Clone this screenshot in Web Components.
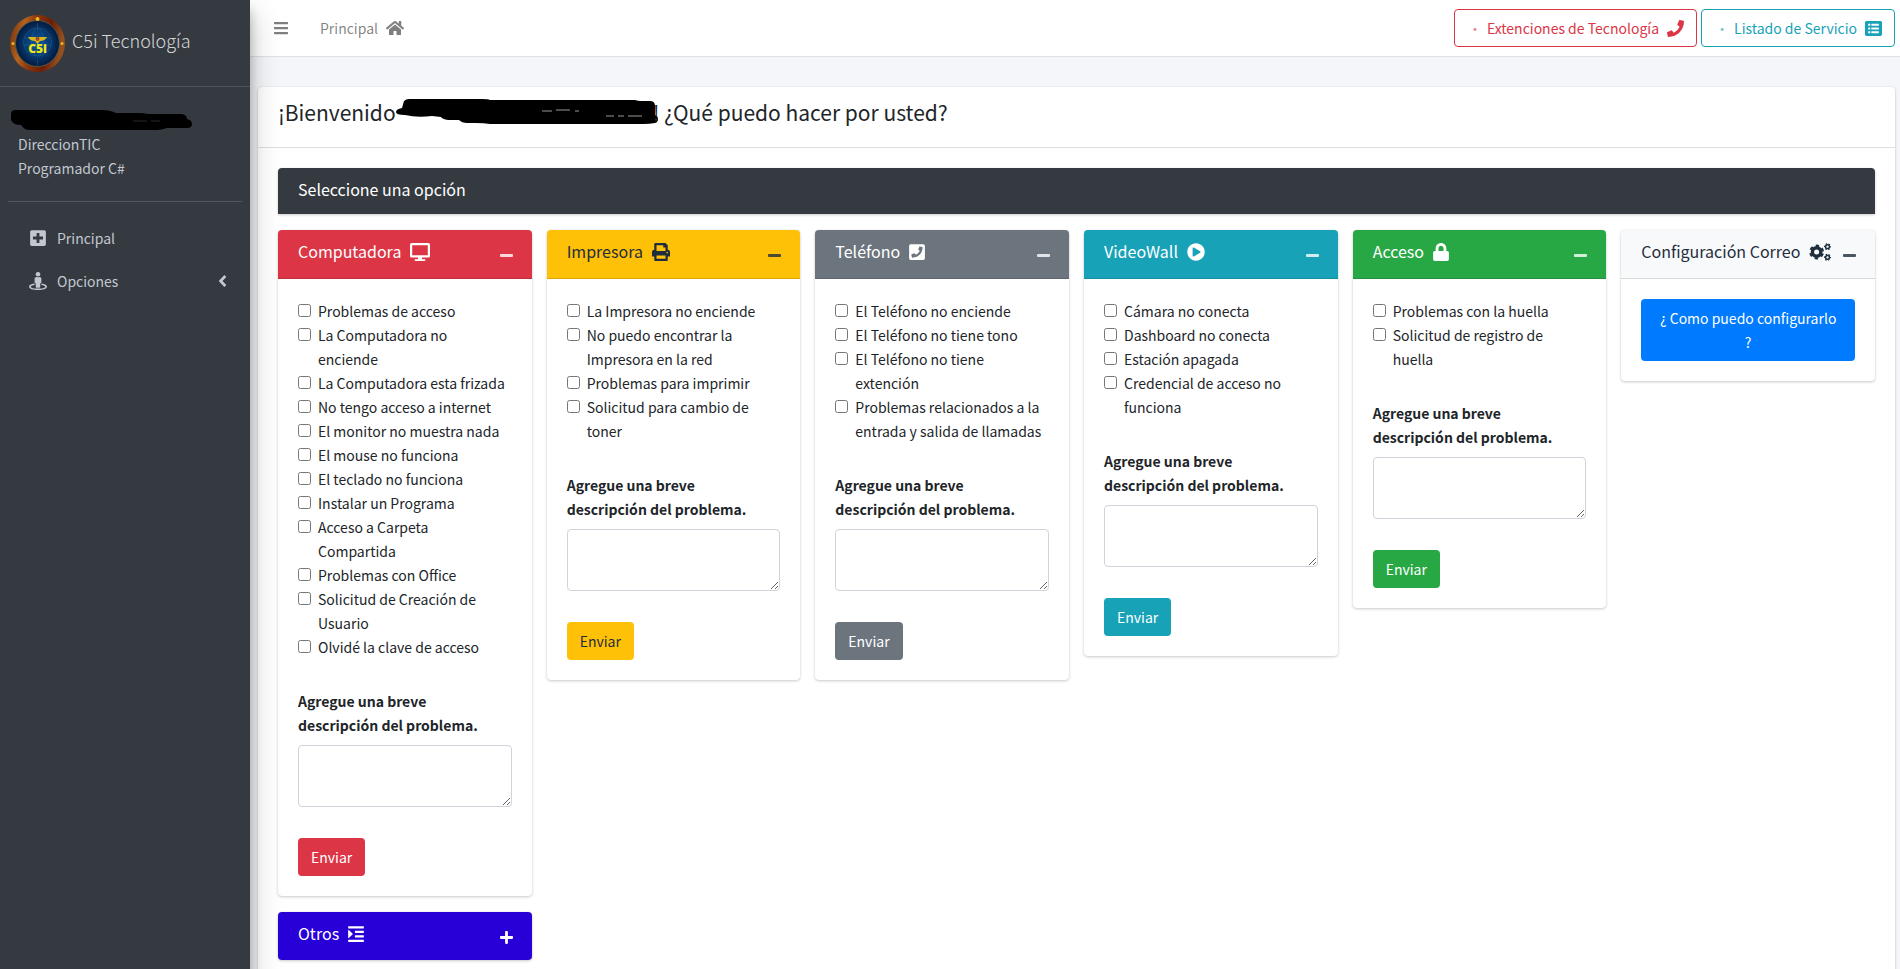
<!DOCTYPE html>
<html lang="es">
<head>
<meta charset="utf-8">
<title>C5i Tecnología</title>
<style>
html { scrollbar-width: none; }
body { margin: 0; font: 400 14px/24px "Noto Sans CJK SC", "Open Sans", sans-serif; color: #212529; background: #f4f6f9; }
</style>
</head>
<body>
<support-app></support-app>

<script>
const SQUARE = 'M400 32H48C21.5 32 0 53.5 0 80v352c0 26.5 21.5 48 48 48h352c26.5 0 48-21.5 48-48V80c0-26.5-21.5-48-48-48z';
const ICONS = {
  bars: [448, '<path d="M16 132h416c9 0 16-7 16-16V76c0-9-7-16-16-16H16C7 60 0 67 0 76v40c0 9 7 16 16 16zm0 160h416c9 0 16-7 16-16v-40c0-9-7-16-16-16H16c-9 0-16 7-16 16v40c0 9 7 16 16 16zm0 160h416c9 0 16-7 16-16v-40c0-9-7-16-16-16H16c-9 0-16 7-16 16v40c0 9 7 16 16 16z"/>'],
  home: [576, '<path d="M280.37 148.26L96 300.11V464a16 16 0 0 0 16 16l112.06-.29a16 16 0 0 0 15.92-16V368a16 16 0 0 1 16-16h64a16 16 0 0 1 16 16v95.64a16 16 0 0 0 16 16.05L464 480a16 16 0 0 0 16-16V300L295.67 148.26a12.19 12.19 0 0 0-15.3 0zM571.6 251.47L488 182.56V44.05a12 12 0 0 0-12-12h-56a12 12 0 0 0-12 12v72.61L318.47 43a48 48 0 0 0-61 0L4.34 251.47a12 12 0 0 0-1.6 16.9l25.5 31A12 12 0 0 0 45.15 301l235.22-193.74a12.19 12.19 0 0 1 15.3 0L530.9 301a12 12 0 0 0 16.9-1.6l25.5-31a12 12 0 0 0-1.7-16.93z"/>'],
  phone: [512, '<path d="M493.4 24.6l-104-24c-11.3-2.6-22.9 3.3-27.5 13.9l-48 112c-4.2 9.8-1.4 21.3 6.9 28l60.6 49.6c-36 76.7-98.9 140.5-177.2 177.2l-49.6-60.6c-6.8-8.3-18.2-11.1-28-6.9l-112 48C3.9 366.5-2 378.1.6 389.4l24 104C27.1 504.2 36.7 512 48 512c256.1 0 464-207.5 464-464 0-11.2-7.7-20.9-18.6-23.4z"/>'],
  list: [512, '<path fill-rule="evenodd" d="M464 32H48C21.5 32 0 53.5 0 80v352c0 26.5 21.5 48 48 48h416c26.500 0 48-21.500 48-48V80c0-26.500-21.500-48-48-48zM96 112v64h64v-64zm96 0v64h224v-64zM96 224v64h64v-64zm96 0v64h224v-64zM96 336v64h64v-64zm96 0v64h224v-64z"/>'],
  desktop: [576, '<path d="M528 0H48C21.5 0 0 21.5 0 48v320c0 26.5 21.5 48 48 48h192l-16 48h-72c-13.3 0-24 10.7-24 24s10.7 24 24 24h272c13.3 0 24-10.7 24-24s-10.7-24-24-24h-72l-16-48h192c26.5 0 48-21.5 48-48V48c0-26.5-21.5-48-48-48zm-16 352H64V64h448v288z"/>'],
  print: [512, '<path d="M448 192V77.25c0-8.49-3.37-16.62-9.37-22.63L393.37 9.37c-6-6-14.14-9.37-22.63-9.37H96C78.33 0 64 14.33 64 32v160c-35.35 0-64 28.65-64 64v112c0 8.84 7.16 16 16 16h48v96c0 17.67 14.33 32 32 32h320c17.67 0 32-14.33 32-32v-96h48c8.84 0 16-7.16 16-16V256c0-35.35-28.65-64-64-64zm-64 256H128v-96h256v96zm0-224H128V64h192v48c0 8.84 7.16 16 16 16h48v96zm48 72c-13.25 0-24-10.75-24-24s10.75-24 24-24 24 10.75 24 24-10.75 24-24 24z"/>'],
  phoneSquare: [448, '<path d="' + SQUARE + 'M94 416c-7.033 0-13.057-4.873-14.616-11.627l-14.998-65a15 15 0 0 1 8.707-17.16l69.998-29.999a15 15 0 0 1 17.518 4.289l30.997 37.885c48.944-22.963 88.297-62.858 110.781-110.78l-37.886-30.997a15.001 15.001 0 0 1-4.289-17.518l30-69.998a15 15 0 0 1 17.16-8.707l65 14.998A14.997 14.997 0 0 1 384 126c0 160.292-129.945 290-290 290z" fill-rule="evenodd"/>'],
  play: [512, '<path d="M256 8C119 8 8 119 8 256s111 248 248 248 248-111 248-248S393 8 256 8zm115.7 272l-176 101c-15.8 8.8-35.7-2.5-35.7-21V152c0-18.4 19.8-29.8 35.7-21l176 107c16.4 9.2 16.4 32.9 0 42z" fill-rule="evenodd"/>'],
  lock: [448, '<path d="M400 224h-24v-72C376 68.2 307.8 0 224 0S72 68.2 72 152v72H48c-26.5 0-48 21.5-48 48v192c0 26.5 21.5 48 48 48h352c26.5 0 48-21.5 48-48V272c0-26.5-21.5-48-48-48zm-104 0H152v-72c0-39.7 32.3-72 72-72s72 32.3 72 72v72z"/>'],
  cogs: [640, '<g fill="none" stroke="currentColor"><circle cx="210" cy="256" r="120" stroke-width="96"/><circle cx="210" cy="256" r="180" stroke-width="60" stroke-dasharray="96 92.5" stroke-dashoffset="142"/><circle cx="520" cy="104" r="54" stroke-width="40"/><circle cx="520" cy="104" r="82" stroke-width="36" stroke-dasharray="44 41.87" stroke-dashoffset="22"/><circle cx="520" cy="408" r="54" stroke-width="40"/><circle cx="520" cy="408" r="82" stroke-width="36" stroke-dasharray="44 41.87" stroke-dashoffset="22"/></g>'],
  indent: [448, '<path d="M27.3 363.3l96-96a16 16 0 0 0 0-22.6l-96-96C17.3 138.7 0 145.8 0 160v192c0 14.3 17.3 21.3 27.3 11.3z"/><rect y="416" width="448" height="64" rx="14"/><rect x="192" y="288" width="256" height="64" rx="13"/><rect x="192" y="160" width="256" height="64" rx="13"/><rect y="32" width="448" height="64" rx="14"/>'],
  plusSquare: [448, '<path fill-rule="evenodd" d="' + SQUARE + 'M92 296c-7 0-12-5-12-12v-56c0-7 5-12 12-12h92v-92c0-7 5-12 12-12h56c7 0 12 5 12 12v92h92c7 0 12 5 12 12v56c0 7-5 12-12 12h-92v92c0 7-5 12-12 12h-56c-7 0-12-5-12-12v-92z"/>'],
  street: [512, '<path d="M367.9 329.76c-4.62 5.3-9.78 10.1-15.9 13.65v22.94c66.52 9.34 112 28.05 112 49.65 0 30.93-93.12 56-208 56S48 446.93 48 416c0-21.6 45.48-40.3 112-49.65v-22.94c-6.12-3.55-11.28-8.35-15.9-13.65C58.87 345.34 0 378.05 0 416c0 53.02 114.62 96 256 96s256-42.98 256-96c0-37.95-58.87-70.66-144.1-86.24z"/><circle cx="256" cy="64" r="64"/><path d="M192 320v96c0 17.7 14.3 32 32 32h64c17.7 0 32-14.3 32-32v-96c17.7 0 32-14.3 32-32v-96c0-26.5-21.5-48-48-48h-11.8a89 89 0 0 1-72.4 0H208c-26.5 0-48 21.5-48 48v96c0 17.7 14.3 32 32 32z"/>'],
  left: [256, '<path d="M31.7 239l136-136c9.4-9.4 24.6-9.4 33.9 0l22.6 22.6c9.4 9.4 9.4 24.6 0 33.9L127.9 256l96.4 96.4c9.4 9.4 9.4 24.6 0 33.9L201.7 409c-9.4 9.4-24.6 9.4-33.9 0l-136-136c-9.5-9.4-9.5-24.6-.1-34z"/>'],
  minus: [448, '<rect y="208" width="448" height="96" rx="32"/>'],
  plus: [448, '<path d="M416 208H272V64c0-17.7-14.3-32-32-32h-32c-17.7 0-32 14.3-32 32v144H32c-17.7 0-32 14.3-32 32v32c0 17.7 14.3 32 32 32h144v144c0 17.7 14.3 32 32 32h32c17.7 0 32-14.3 32-32V304h144c17.7 0 32-14.3 32-32v-32c0-17.7-14.3-32-32-32z"/>']
};

class Base extends HTMLElement {
  connectedCallback() {
    if (!this.shadowRoot) this.attachShadow({ mode: 'open' }).innerHTML = this.view();
  }
}

/* <fa-icon name size>: solid glyph as tall as its size attribute */
customElements.define('fa-icon', class extends Base {
  view() {
    const [w, body] = ICONS[this.getAttribute('name')];
    const h = Number(this.getAttribute('size') || 16);
    return `<style>:host{display:inline-flex;flex:none}svg{display:block;fill:currentColor}</style>
      <svg width="${Math.round(w * h / 512)}" height="${h}" viewBox="0 0 ${w} 512" aria-hidden="true">${body}</svg>`;
  }
});

customElements.define('brand-logo', class extends Base {
  view() {
    return `<style>:host{display:block;flex:none}svg{display:block}</style>
    <svg width="55" height="57" viewBox="0 0 55 57" role="img" aria-label="C5i">
      <defs>
        <linearGradient id="rim" x1="0" x2="1" y1="0" y2=".2"><stop offset="0" stop-color="#6b2a0c"/><stop offset=".28" stop-color="#b5621f"/><stop offset=".5" stop-color="#8a3408"/><stop offset=".75" stop-color="#6b1d05"/><stop offset="1" stop-color="#94501c"/></linearGradient>
        <radialGradient id="sea"><stop offset="0" stop-color="#0b5a9c"/><stop offset=".6" stop-color="#07386f"/><stop offset="1" stop-color="#04183a"/></radialGradient>
      </defs>
      <ellipse cx="27.5" cy="28.5" rx="27.5" ry="28.5" fill="url(#rim)"/>
      <ellipse cx="27.5" cy="28.5" rx="22" ry="23" fill="url(#sea)" stroke="#4c5a48"/>
      <g fill="none" stroke="#2b7193" opacity=".4"><ellipse cx="27.5" cy="27" rx="14" ry="14"/><ellipse cx="27.5" cy="27" rx="6" ry="14"/><path d="M14 23h27M14 30h27M27.5 8v8M27.5 45v6"/></g>
      <path d="M18 22h8l1.5 2 1.5-2h8q-2 4-7 4l-2.5 3-2.5-3q-5 0-7-4z" fill="#d9b41c"/><circle cx="27.5" cy="24" r="2" fill="#a54a2a"/>
      <g fill="#f2b61b"><circle cx="27.5" cy="4" r="2"/><circle cx="3" cy="28.5" r="1.5"/><circle cx="52" cy="28.5" r="1.5"/></g>
      <text x="27.5" y="38" text-anchor="middle" font-family="Open Sans, sans-serif" font-weight="800" font-size="12" fill="#efe41a">C5i</text>
    </svg>`;
  }
});

customElements.define('nav-item', class extends Base {
  view() {
    const more = this.hasAttribute('more') ? '<fa-icon name="left" size="18"></fa-icon>' : '';
    return `<style>:host{display:block}
      a{display:flex;align-items:center;height:40px;padding:0 15px 0 21px;color:inherit;text-decoration:none}
      .icon{width:18px;display:flex;justify-content:center;margin-right:10px}
      span.label{flex:1}</style>
      <a href="#"><span class="icon"><fa-icon name="${this.getAttribute('icon')}" size="18"></fa-icon></span><span class="label"><slot></slot></span>${more}</a>`;
  }
});

customElements.define('side-bar', class extends Base {
  view() {
    return `<style>
      :host{display:block;flex:none;box-sizing:border-box;width:250px;background:#343a40;color:#c2c7d0;position:relative;z-index:2;
        box-shadow:0 14px 28px rgba(0,0,0,.25),0 10px 10px rgba(0,0,0,.22)}
      .brand{display:flex;align-items:center;gap:7px;height:86px;padding-left:10px;border-bottom:1px solid #4b545c;color:rgba(255,255,255,.8);
        font-size:18px;font-weight:300;text-decoration:none}
      .brand span{padding-bottom:6px}
      .user{margin:0 8px;padding:22px 0 21px 10px;border-bottom:1px solid #4f5962}
      .user svg{display:block;margin:0 0 1px -8px}
      .user p{margin:0}
      nav{display:flex;flex-direction:column;gap:3px;padding:16px 8px}
    </style>
    <a class="brand" href="#"><brand-logo></brand-logo><span>C5i Tecnología</span></a>
    <div class="user">
      <svg width="182" height="22" viewBox="0 0 182 22" aria-hidden="true"><path d="M4 1h88q8 0 14 3h22q6 0 10 1h34q5 1 5 5 5 1 5 5 0 4-5 4h-20q-6 2-10 2H20q-6 0-9-5-8 0-10-5V5q0-3 3-4z"/><path d="M123 12h14m4 0h9" stroke="#343a40" opacity=".7"/></svg>
      <p>DireccionTIC</p><p>Programador C#</p>
    </div>
    <nav><nav-item icon="plusSquare">Principal</nav-item><nav-item icon="street" more>Opciones</nav-item></nav>`;
  }
});

customElements.define('outline-button', class extends Base {
  view() {
    return `<style>:host{display:block;color:var(--tone)}
      button{display:flex;align-items:center;height:38px;padding:0 12px;border:1px solid;border-radius:4px;background:none;color:inherit;font:inherit}
      i{width:16px;margin-right:4px;text-align:center;font-style:normal;opacity:.6}
      fa-icon{margin-left:8px}</style>
      <button type="button"><i>·</i><slot></slot><fa-icon name="${this.getAttribute('icon')}" size="17"></fa-icon></button>`;
  }
});

customElements.define('top-bar', class extends Base {
  view() {
    return `<style>
      :host{display:flex;align-items:center;justify-content:space-between;box-sizing:border-box;height:57px;padding:0 5px 0 24px;background:#fff;border-bottom:1px solid #dee2e6;color:rgba(0,0,0,.5)}
      .links,.actions{display:flex;align-items:center}
      .links{gap:32px}.actions{gap:4px}
      a{display:flex;align-items:center;gap:8px;color:inherit;text-decoration:none}
    </style>
    <div class="links"><a href="#" aria-label="Menú"><fa-icon name="bars"></fa-icon></a><a href="#">Principal <fa-icon name="home"></fa-icon></a></div>
    <div class="actions"><outline-button icon="phone" style="--tone:#dc3545">Extenciones de Tecnología</outline-button><outline-button icon="list" style="--tone:#17a2b8">Listado de Servicio</outline-button></div>`;
  }
});

/* Coloured card with a collapsible body; tone and ink come in as custom properties */
customElements.define('option-card', class extends Base {
  view() {
    const closed = this.hasAttribute('closed');
    return `<style>
      :host{display:block;border-radius:4px;background:#fff;box-shadow:0 0 1px rgba(0,0,0,.125),0 1px 3px rgba(0,0,0,.2)}
      header{display:flex;box-sizing:border-box;height:${closed ? 48 : 49}px;padding:11px 19px 11px 20px;background:var(--tone);color:var(--ink);
        border-radius:${closed ? '4px' : '4px 4px 0 0'};border-bottom:${closed ? 0 : 1}px solid rgba(0,0,0,.125)}
      h3{flex:1;display:flex;align-items:center;gap:9px;margin:0;height:21px;font-size:16px;line-height:21px;font-weight:400;white-space:nowrap}
      button{display:flex;align-items:center;height:29px;padding:0;border:0;background:none;color:inherit;opacity:${closed ? 1 : .8}}
      .body{padding:20px}
    </style>
    <header><h3>${this.getAttribute('heading')}<fa-icon name="${this.getAttribute('icon')}" size="18"></fa-icon></h3>
    <button type="button" aria-label="${closed ? 'Expandir' : 'Contraer'}"><fa-icon name="${closed ? 'plus' : 'minus'}" size="15"></fa-icon></button></header>
    ${closed ? '' : '<div class="body"><slot></slot></div>'}`;
  }
});

/* Problem checklist; the items attribute holds the options separated by "|" */
customElements.define('ticket-form', class extends Base {
  view() {
    const rows = this.getAttribute('items').split('|').map(t => `<label class="row"><input type="checkbox"><span>${t}</span></label>`).join('');
    return `<style>
      :host{display:block}
      .list{margin-bottom:30px;padding-right:4px}
      .row{display:flex;align-items:flex-start}
      input{flex:none;width:13px;height:13px;margin:5px 7px 0 0}
      .title{display:block;font-weight:700;margin-bottom:8px;padding-right:20px}
      textarea{display:block;box-sizing:border-box;width:100%;height:62px;margin-bottom:31px;padding:6px 12px;border:1px solid #ced4da;border-radius:4px;font:inherit;resize:vertical}
      button{display:block;height:38px;padding:0 13px;border:0;border-radius:4px;background:var(--tone);color:var(--ink);font:inherit}
    </style>
    <div class="list">${rows}</div>
    <label class="title" for="note">Agregue una breve descripción del problema.</label>
    <textarea id="note" rows="2"></textarea>
    <button type="button">Enviar</button>`;
  }
});

const CARDS = [
  ['Computadora', 'desktop', '#dc3545', '#fff', 'Problemas de acceso|La Computadora no enciende|La Computadora esta frizada|No tengo acceso a internet|El monitor no muestra nada|El mouse no funciona|El teclado no funciona|Instalar un Programa|Acceso a Carpeta Compartida|Problemas con Office|Solicitud de Creación de Usuario|Olvidé la clave de acceso'],
  ['Impresora', 'print', '#ffc107', '#1f2d3d', 'La Impresora no enciende|No puedo encontrar la Impresora en la red|Problemas para imprimir|Solicitud para cambio de toner'],
  ['Teléfono', 'phoneSquare', '#6c757d', '#fff', 'El Teléfono no enciende|El Teléfono no tiene tono|El Teléfono no tiene extención|Problemas relacionados a la entrada y salida de llamadas'],
  ['VideoWall', 'play', '#17a2b8', '#fff', 'Cámara no conecta|Dashboard no conecta|Estación apagada|Credencial de acceso no funciona'],
  ['Acceso', 'lock', '#28a745', '#fff', 'Problemas con la huella|Solicitud de registro de huella']
];

customElements.define('welcome-panel', class extends Base {
  view() {
    const cards = CARDS.map(([h, icon, tone, ink, items]) =>
      `<option-card heading="${h}" icon="${icon}" style="--tone:${tone};--ink:${ink}"><ticket-form items="${items}"></ticket-form></option-card>`).join('');
    return `<style>
      :host{display:block;background:#fff;border-radius:4px;box-shadow:0 0 1px rgba(0,0,0,.125),0 1px 3px rgba(0,0,0,.2)}
      .head{padding:11px 20px 21px;border-bottom:1px solid #dfdfdf}
      h1{display:flex;margin:0;font-size:21px;line-height:28px;font-weight:400;white-space:pre}
      h1 svg{display:block;flex:none;margin:1px -5px -1px 0}
      .body{padding:20px}
      .bar{box-sizing:border-box;height:46px;margin:0 0 16px;padding:11px 20px;border-radius:4px 4px 0 0;background:#343a40;color:#fff;font-size:16px;line-height:21px;font-weight:400;box-shadow:0 1px 3px rgba(0,0,0,.2)}
      .grid{display:grid;grid-template-columns:repeat(6,minmax(0,1fr));gap:16px 15px;align-items:start}
      .go{display:block;width:100%;padding:7px 15px;border:0;border-radius:4px;background:#007bff;color:#fff;font:inherit}
    </style>
    <div class="head"><h1>¡Bienvenido<svg width="262" height="28" viewBox="0 0 262 28" aria-hidden="true"><path d="M8 2q2-2 5-2h73q6 0 8 1h145q3 1 6 1h9q5 0 5 5v9q3 1 3 4t-3 4q-5 1-12 1H94q-6-1-14-1H71q-5 0-8-3H52q-6-1-7-3l-9-1q-15 2-27-1-9 0-9-3t6-4z"/><path d="M146 12h10m4-1h14m5 1h4m27 5h8m4 0h6m4 0h14" stroke="#999"/></svg>! ¿Qué puedo hacer por usted?</h1></div>
    <div class="body">
      <h2 class="bar">Seleccione una opción</h2>
      <div class="grid">${cards}
        <option-card heading="Configuración Correo" icon="cogs" style="--tone:#f8f9fa;--ink:#1f2d3d"><button class="go" type="button">¿ Como puedo configurarlo ?</button></option-card>
        <option-card closed heading="Otros" icon="indent" style="--tone:#2800d7;--ink:#fff"></option-card>
      </div>
    </div>`;
  }
});

customElements.define('support-app', class extends Base {
  view() {
    return `<style>
      :host{display:flex;min-height:100vh}
      .page{flex:1;min-width:0}
      main{padding:30px 5px 16px 8px}
    </style>
    <side-bar></side-bar><div class="page"><top-bar></top-bar><main><welcome-panel></welcome-panel></main></div>`;
  }
});
</script>
</body>
</html>
